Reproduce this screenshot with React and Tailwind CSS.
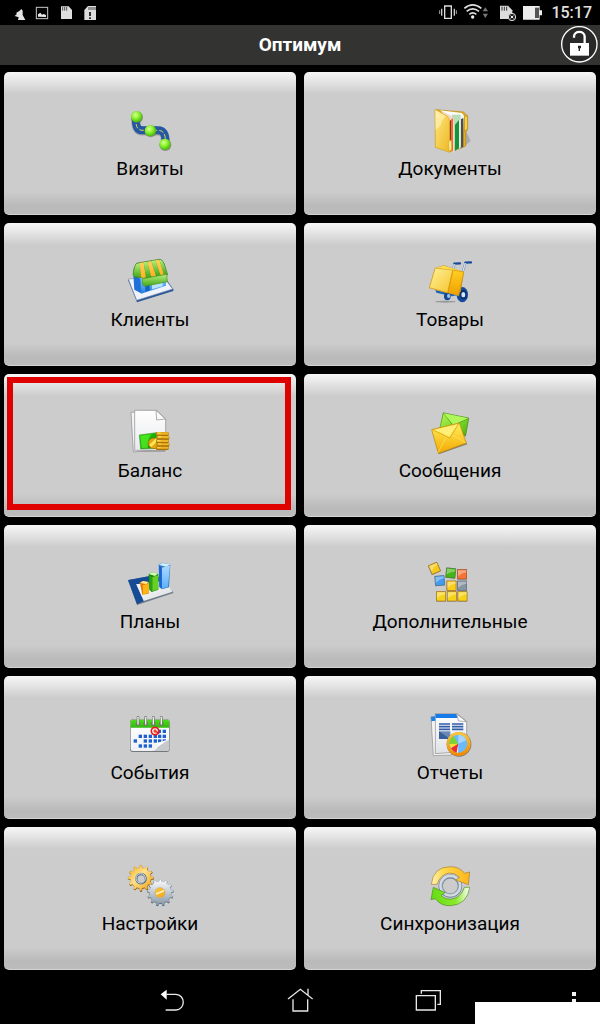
import React from "react";

const Svg = ({ box, children }) => (
  <svg viewBox={box} className="size-12 overflow-visible" aria-hidden="true">
    {children}
  </svg>
);

const Grad = ({ id, from, to, diagonal }) => (
  <linearGradient id={id} x1="0" y1="0" x2={diagonal ? "1" : "0"} y2="1">
    <stop offset="0" stopColor={from} />
    <stop offset="1" stopColor={to} />
  </linearGradient>
);

function VisitsIcon() {
  return (
    <Svg box="48 18 144 144">
      <defs>
        <radialGradient id="vBall" cx=".4" cy=".35" r=".65">
          <stop offset="0" stopColor="#d8ff9a" />
          <stop offset=".5" stopColor="#8bf22c" />
          <stop offset="1" stopColor="#43b80a" />
        </radialGradient>
      </defs>
      <path d="M78 54C76 82 82 94 100 93H142C160 92 168 104 166 134" fill="none" stroke="#888" strokeOpacity=".6" strokeWidth="27" />
      <path d="M78 52C76 80 82 92 100 91H142C160 90 168 102 166 132" fill="none" stroke="#2458a5" strokeWidth="24" />
      <path d="M78 52C76 80 82 92 100 91H142C160 90 168 102 166 132" fill="none" stroke="#e8d848" strokeWidth="3" strokeDasharray="14 6" />
      {[[80, 50], [121, 92], [165, 133]].map(([x, y]) => (
        <g key={x}>
          <circle cx={x + 1} cy={y + 2} r="18" fill="#666" fillOpacity=".6" />
          <circle cx={x} cy={y} r="17" fill="url(#vBall)" />
        </g>
      ))}
    </Svg>
  );
}

function DocumentsIcon() {
  return (
    <Svg box="48 18 144 144">
      <defs>
        <Grad id="dFront" from="#ffe982" to="#ecb51e" diagonal />
        <Grad id="dPage" from="#ffffff" to="#c9d4ce" />
      </defs>
      <path d="M158 144L182 122L168 92L150 146Z" fill="#777" fillOpacity=".4" />
      <path d="M76 29L160 36L172 47V90L167 96V138L148 147L78 142Z" fill="#e4ac22" stroke="#b8860b" strokeWidth="2" />
      <path d="M163 48H173V88L163 94Z" fill="#f5cf4e" stroke="#b18422" strokeWidth="2" />
      <path d="M90 31L155 39L162 47L157 144L148 146L120 50Z" fill="url(#dPage)" />
      <path d="M152 58L160 54V140L152 145Z" fill="#504e45" />
      <path d="M126 44L152 44V139L134 153Z" fill="#b8ddb9" />
      <path d="M135 74L147 60V144L135 153Z" fill="#159338" />
      <path d="M147 60L152 58V140L147 145Z" fill="#e7eeee" />
      <path d="M96 34L125 47L132 60V154L120 157Z" fill="#f4dace" />
      <path d="M118 64L129 54V153L118 157Z" fill="#f1672e" />
      <path d="M119 65L123 60V155L119 157Z" fill="#713317" />
      <path d="M75 28L111 48Q119 54 119 65V119L125 124V151L119 157L76 142Z" fill="url(#dFront)" stroke="#d3a321" strokeWidth="2" />
      <path d="M76 30L107 48Q97 57 92 76L77 90Z" fill="#fff8c9" fillOpacity=".55" />
      <path d="M116 124L124 122V149L117 153Z" fill="#fff2a2" stroke="#d6a42c" strokeWidth="2" />
    </Svg>
  );
}

function ClientsIcon() {
  return (
    <Svg box="48 21 144 144">
      <defs>
        <Grad id="cWall" from="#9bdaff" to="#237de1" />
        <Grad id="cGreen" from="#b6f079" to="#42a51a" />
        <Grad id="cGold" from="#ffd25b" to="#ffaf26" />
      </defs>
      <path d="M54 90L81 157L190 123V118L166 84Z" fill="#2b5997" />
      <path d="M55 87L80 151L188 117L160 80Z" fill="#eff3fb" stroke="#7c8da9" strokeWidth="2" />
      <path d="M70 74L93 88V130L73 119Z" fill="#1e70d6" />
      <path d="M91 78L168 73V107L93 131Z" fill="url(#cWall)" />
      <path d="M106 99L119 97V121L106 125Z" fill="#1563bf" />
      <path d="M126 97L158 90V109L126 118Z" fill="#b8e3ff" />
      <path d="M78 42Q80 38 88 38L148 28Q157 28 162 40L173 74Q155 83 140 77Q119 89 100 84L79 82L69 76Q70 54 78 42Z" fill="#3f9a20" stroke="#39791c" strokeWidth="2" />
      <path d="M79 42L89 39L93 83L70 78Q72 54 79 42Z" fill="url(#cGreen)" />
      <path d="M89 39L101 37L108 82Q100 86 93 81Z" fill="url(#cGold)" />
      <path d="M101 37L112 35L123 80Q114 83 108 80Z" fill="url(#cGreen)" />
      <path d="M112 35L124 33L138 77Q130 82 123 79Z" fill="url(#cGold)" />
      <path d="M124 33L136 31L151 76Q143 79 138 76Z" fill="url(#cGreen)" />
      <path d="M136 31L148 29L162 73Q157 77 151 74Z" fill="url(#cGold)" />
      <path d="M148 29Q157 29 161 41L172 72L162 74Z" fill="url(#cGreen)" />
      <path d="M98 86L170 73L172 95L104 109Q94 104 98 86Z" fill="url(#cGreen)" stroke="#489421" strokeWidth="2" />
    </Svg>
  );
}

function GoodsIcon() {
  return (
    <Svg box="48 21 144 144">
      <defs>
        <Grad id="gFront" from="#fff29b" to="#f5c42d" diagonal />
        <Grad id="gSide" from="#ffcf24" to="#efa000" />
      </defs>
      <ellipse cx="106" cy="155" rx="31" ry="3" fill="#777" fillOpacity=".6" />
      <path d="M133 41L150 40M166 38L183 37" stroke="#174b9a" strokeWidth="7" strokeLinecap="round" />
      <path d="M133 42L128 66M166 39L158 66" stroke="#7e99bd" strokeWidth="7" />
      <path d="M133 42L128 66M166 39L158 66" stroke="#e1edfa" strokeWidth="3" />
      <path d="M76 120L122 131L147 122V134L126 139L79 128Z" fill="#1a66bb" />
      <ellipse cx="112" cy="139" rx="10" ry="12" fill="#104a97" />
      <ellipse cx="116" cy="138" rx="5" ry="6" fill="#a6bfde" />
      <ellipse cx="157" cy="134" rx="17" ry="23" fill="#144a9d" />
      <ellipse cx="160" cy="134" rx="10" ry="14" fill="#092f73" />
      <ellipse cx="160" cy="134" rx="6" ry="8" fill="#d7e4f4" />
      <path d="M75 54L101 46L162 66L152 127L113 130L57 114Z" fill="#c88a08" />
      <path d="M76 54L101 47L161 65L128 61Z" fill="#ffe254" />
      <path d="M76 54L128 60L113 128L58 113Z" fill="url(#gFront)" stroke="#d6a21d" strokeWidth="2" />
      <path d="M129 60L161 66L146 137L114 128Z" fill="url(#gSide)" stroke="#d49508" strokeWidth="2" />
    </Svg>
  );
}

function BalanceIcon() {
  return (
    <Svg box="48 24 144 144">
      <defs>
        <Grad id="bPage" from="#ffffff" to="#e8eaee" />
        <Grad id="bCash" from="#24d509" to="#138a00" diagonal />
      </defs>
      <path d="M71 154L166 151V155H77Z" fill="#777" fillOpacity=".6" />
      <path d="M63 37L120 33L125 151L70 156Z" fill="#f3f3f5" stroke="#888" strokeWidth="2" />
      <path d="M74 31H140L167 57V151H74Z" fill="url(#bPage)" stroke="#888" strokeWidth="2" />
      <path d="M138 31L166 57L140 60Z" fill="#fafafa" stroke="#898989" strokeWidth="2" />
      <path d="M88 105L140 98L139 145L92 147Z" fill="url(#bCash)" stroke="#3f9a2c" strokeWidth="2" />
      <path d="M91 107L124 103Q110 123 114 143L95 144Z" fill="#59f42b" fillOpacity=".7" />
      <circle cx="131" cy="130" r="16" fill="#e3a711" stroke="#a66e00" strokeWidth="2" />
      <path d="M121 138L142 117" stroke="#ffe458" strokeWidth="9" />
      {[144, 134, 124, 113, 102].map((y, i) => (
        <g key={y}>
          <rect x={138 + (i % 2) * 2} y={y - 6} width="38" height="12" rx="3" fill="#a87308" />
          <rect x={140 + (i % 2) * 2} y={y - 5} width="35" height="7" rx="2" fill="#efb523" />
          <path d={`M${142 + (i % 2) * 2} ${y - 3}h10`} stroke="#ffe269" strokeWidth="3" />
        </g>
      ))}
    </Svg>
  );
}

function MessagesIcon() {
  return (
    <Svg box="48 24 144 144">
      <defs>
        <Grad id="mG" from="#b8fa54" to="#4bb40e" diagonal />
        <Grad id="mY" from="#fff05c" to="#f4a800" />
      </defs>
      <path d="M99 37L177 55L167 110L91 90Z" fill="#666" fillOpacity=".6" />
      <path d="M100 39L176 54L167 106L88 91Z" fill="url(#mG)" stroke="#4d9714" strokeWidth="2" />
      <path d="M101 40L130 77L175 55M130 77L167 105" fill="none" stroke="#398f0c" strokeWidth="2" />
      <path d="M101 40L130 74L174 55Z" fill="#b0f75c" />
      <path d="M66 92L86 163L172 133L169 128Z" fill="#6c603f" fillOpacity=".7" />
      <path d="M65 89L148 69L169 129L85 160Z" fill="url(#mY)" stroke="#c08b0d" strokeWidth="2" />
      <path d="M84 158L110 109M167 128L126 105" stroke="#f9e66f" strokeWidth="2" />
      <path d="M67 89L119 114L147 70Z" fill="#ffe55a" stroke="#c99508" strokeWidth="2" />
      <path d="M73 89L118 108L143 73Z" fill="#fff48b" fillOpacity=".6" />
    </Svg>
  );
}

function PlansIcon() {
  return (
    <Svg box="48 27 144 144">
      <defs>
        <Grad id="pBase" from="#ffffff" to="#d9dce0" diagonal />
        <Grad id="pBlue" from="#add9ff" to="#59b0ff" />
      </defs>
      <path d="M54 91L124 77L189 124L190 129L81 165Z" fill="#6e7b87" />
      <path d="M54 90L140 74L163 102L102 153L81 163Z" fill="#164c96" />
      <path d="M79 103L164 92L188 125L101 153Z" fill="url(#pBase)" />
      <path d="M79 103L93 101L106 135L96 139Z" fill="#f1f2f7" />
      <path d="M90 98L99 93L116 97V131L97 134Z" fill="#e67800" />
      <path d="M90 98L99 93L116 96L108 103Z" fill="#ffe88f" />
      <path d="M98 106L116 101V130L99 133Z" fill="#ffb516" />
      <path d="M116 72L127 67L145 72V119L125 126L118 119Z" fill="#18820f" />
      <path d="M116 72L127 67L144 71L135 78Z" fill="#d5ffb0" />
      <path d="M118 76L126 81V124L119 118Z" fill="#25a511" />
      <path d="M127 81L145 76V118L127 124Z" fill="#69ce25" />
      <path d="M146 43L157 38L181 43L177 112L156 118L148 111Z" fill="#3d80bf" />
      <path d="M146 44L157 39L181 43L168 50Z" fill="#d3efff" />
      <path d="M147 46L155 52V116L148 110Z" fill="#1763dc" />
      <path d="M156 53L180 46L174 110L156 116Z" fill="url(#pBlue)" />
    </Svg>
  );
}

const Block = ({ x, y, color, edge, turn = 0 }) => (
  <g transform={`rotate(${turn} ${x} ${y})`}>
    <rect x={x - 15} y={y - 15} width="30" height="31" rx="2" fill="#666" fillOpacity=".6" />
    <rect x={x - 13} y={y - 14} width="27" height="28" fill={color} stroke={edge} strokeWidth="2" />
    <path d={`M${x - 12} ${y - 12}h25v6q-13 1-25 12Z`} fill="white" fillOpacity=".35" />
  </g>
);

function ExtraIcon() {
  return (
    <Svg box="948 27 144 144">
      <Block x={973} y={55} color="#f6ca1d" edge="#a67916" turn={-24} />
      <Block x={989} y={92} color="#439bed" edge="#477297" turn={-5} />
      <Block x={1022} y={69} color="#43b516" edge="#457f24" turn={6} />
      <Block x={1056} y={73} color="#f67338" edge="#ae5125" />
      <Block x={1024} y={107} color="#f9ce17" edge="#b07618" />
      <Block x={1056} y={107} color="#8794a1" edge="#607383" />
      {[993, 1025, 1057].map((x) => (
        <Block key={x} x={x} y={139} color="#f4d319" edge="#b27919" />
      ))}
    </Svg>
  );
}

function EventsIcon() {
  const rows = [
    [79, [148, 163]],
    [94, [91, 106, 121, 136, 149, 163]],
    [108, [76, 106, 121, 136, 149, 163]],
    [123, [91, 106, 121]],
  ];
  return (
    <Svg box="48 15 144 144">
      <defs>
        <Grad id="ePage" from="#ffffff" to="#eef1f6" />
        <Grad id="eTop" from="#4fdc1a" to="#32b80c" />
      </defs>
      <rect x="60" y="43" width="119" height="98" rx="9" fill="#777" />
      <rect x="62" y="44" width="115" height="94" rx="7" fill="url(#ePage)" />
      <path d="M62 68V51Q62 44 70 44H169Q178 44 178 51V68Z" fill="url(#eTop)" />
      {rows.map(([y, xs]) =>
        xs.map((x) => <rect key={`${x}-${y}`} x={x - 5} y={y - 5} width="10" height="10" fill="#1e61ce" />)
      )}
      <path d="M126 138Q145 135 144 116Q155 111 178 104V130Q178 138 170 138Z" fill="#c6cacc" />
      <path d="M128 136Q146 128 143 113L177 103Z" fill="#fff" />
      {[84, 107, 130, 154].map((x) => (
        <g key={x}>
          <circle cx={x} cy="56" r="7" fill="#66824e" />
          <path d={`M${x} 37V58`} stroke="#777" strokeWidth="8" strokeLinecap="round" />
          <path d={`M${x} 37V57`} stroke="#eee" strokeWidth="4" strokeLinecap="round" />
        </g>
      ))}
      <circle cx="135" cy="78" r="11" fill="white" stroke="#e51921" strokeWidth="5" />
      <circle cx="135" cy="78" r="5" fill="#ff4520" />
      <path d="M137 80L148 85" stroke="#e51921" strokeWidth="4" />
    </Svg>
  );
}

function ReportsIcon() {
  return (
    <Svg box="948 15 144 144">
      <defs>
        <Grad id="rPage" from="#ffffff" to="#dfe2e5" />
        <Grad id="rRing" from="#ffc83b" to="#ef8900" />
      </defs>
      <path d="M963 35L1017 32L1025 150L970 152Z" fill="#f5f5f6" stroke="#888" strokeWidth="2" />
      <path d="M963 36L978 34V47L964 49Z" fill="#1681ed" />
      <path d="M976 26H1041L1070 49V139L976 146Z" fill="url(#rPage)" stroke="#858585" strokeWidth="2" />
      <path d="M976 27H1039L1043 39H977Z" fill="#167bea" />
      <path d="M1040 27L1069 50L1046 48Z" fill="#f9fbff" stroke="#8d8d8d" strokeWidth="2" />
      <path d="M987 57H1020M987 65H1020M987 73H1020M1026 57H1060M1026 65H1060M1026 73H1060" stroke="#315da9" strokeWidth="5" />
      <rect x="987" y="79" width="34" height="23" fill="#6c89b6" />
      <path d="M987 79L1021 102H987Z" fill="#365f9c" />
      <circle cx="1047" cy="118" r="37" fill="#777" />
      <circle cx="1046" cy="117" r="36" fill="url(#rRing)" />
      <circle cx="1045" cy="116" r="27" fill="#6abaff" />
      <path d="M1045 116L1031 93A27 27 0 0 0 1018 117Z" fill="#7ed331" />
      <path d="M1045 116L1018 117L1023 130Z" fill="#ffda35" />
      <path d="M1045 116L1023 130Q1029 140 1040 143Z" fill="#f32a25" />
      <path d="M1045 116L1040 143H1044Z" fill="#f4f4f4" />
      <path d="M1045 116V89A27 27 0 0 1 1069 106Z" fill="#a7d5ff" />
    </Svg>
  );
}

function gearPath(cx, cy, outer, inner, teeth) {
  const points = [];
  for (let i = 0; i < teeth; i++) {
    [[-0.25, inner], [-0.14, outer], [0.14, outer], [0.25, inner]].forEach(([shift, r]) => {
      const a = ((i + shift) / teeth) * Math.PI * 2 - Math.PI / 2;
      points.push(`${cx + r * Math.cos(a)} ${cy + r * Math.sin(a)}`);
    });
  }
  return `M${points.join("L")}Z`;
}

function SettingsIcon() {
  return (
    <Svg box="48 18 144 144">
      <defs>
        <Grad id="sGold" from="#ffcc35" to="#f4a31a" diagonal />
        <linearGradient id="sShine" x1="0" y1="0" x2="1" y2="1">
          <stop offset="0" stopColor="#f7b31c" />
          <stop offset=".45" stopColor="#ffe08a" />
          <stop offset="1" stopColor="#ef9d09" />
        </linearGradient>
        <Grad id="sSilver" from="#ffffff" to="#8798a6" />
      </defs>
      <path d={gearPath(93, 71, 39, 31, 12)} fill="#71531e" />
      <path d={gearPath(92, 69, 38, 31, 12)} fill="url(#sShine)" stroke="#d59222" strokeWidth="1" />
      <circle cx="93" cy="71" r="14" fill="#cccccc" stroke="#5b7085" strokeWidth="7" />
      <circle cx="92" cy="70" r="14" fill="none" stroke="#d6e4ee" strokeWidth="3" />
      <path d={gearPath(151, 114, 40, 33, 13)} fill="#42576a" />
      <path d={gearPath(151, 112, 39, 33, 13)} fill="url(#sSilver)" stroke="#8b98a4" strokeWidth="1" />
      <circle cx="150" cy="113" r="15" fill="url(#sGold)" stroke="#c8a969" strokeWidth="2" />
      <path d="M138 117L162 107" stroke="#fff4c4" strokeWidth="5" />
    </Svg>
  );
}

function SyncIcon() {
  return (
    <Svg box="948 18 144 144">
      <defs>
        <linearGradient id="yGold" x1="0" y1="0" x2="1" y2="0">
          <stop offset="0" stopColor="#fff5bb" />
          <stop offset=".3" stopColor="#ffd94d" />
          <stop offset="1" stopColor="#fdb61b" />
        </linearGradient>
        <linearGradient id="yGreen" x1="0" y1="0" x2="1" y2="0">
          <stop offset="0" stopColor="#64dc12" />
          <stop offset=".65" stopColor="#8ce92c" />
          <stop offset="1" stopColor="#ffffff" />
        </linearGradient>
      </defs>
      <circle cx="1021" cy="93" r="29" fill="none" stroke="#6b7f91" strokeWidth="13" />
      <circle cx="1021" cy="92" r="29" fill="none" stroke="#d3dbe2" strokeWidth="9" />
      <circle cx="1021" cy="92" r="25" fill="none" stroke="#8596a5" strokeWidth="2" />
      <path d="M964 88Q970 35 1022 35Q1048 35 1064 55L1079 51L1075 89L1037 75L1049 67Q1035 53 1018 54Q992 57 981 88Z" fill="url(#yGold)" stroke="#a77b29" strokeWidth="2" />
      <path d="M1079 97Q1072 148 1023 152Q993 154 976 131L963 134L970 97L1006 113L993 121Q1009 138 1034 130Q1056 121 1063 97Z" fill="url(#yGreen)" stroke="#4f8d26" strokeWidth="2" />
    </Svg>
  );
}

const items = [
  ["Визиты", VisitsIcon],
  ["Документы", DocumentsIcon],
  ["Клиенты", ClientsIcon],
  ["Товары", GoodsIcon],
  ["Баланс", BalanceIcon, true],
  ["Сообщения", MessagesIcon],
  ["Планы", PlansIcon],
  ["Дополнительные", ExtraIcon],
  ["События", EventsIcon],
  ["Отчеты", ReportsIcon],
  ["Настройки", SettingsIcon],
  ["Синхронизация", SyncIcon],
];

function Tile({ label, Icon, marked }) {
  return (
    <button
      type="button"
      className="relative flex h-[143px] flex-col items-center rounded-[5px] border-b border-[#d4d4d4] bg-[linear-gradient(to_bottom,#f7f7f7_0px,#cccccc_22px,#cccccc_120px,#bababa_134px,#bcbcbc_100%)] pt-[34px] text-black"
    >
      <Icon />
      <span className="text-[19px] leading-[30px]">{label}</span>
      {marked && <span className="absolute top-[3px] right-[5px] bottom-[6px] left-[3px] border-[6px] border-[#df0000]" />}
    </button>
  );
}

function StatusBar() {
  return (
    <div className="flex h-[25px] items-center justify-between pr-2 pl-[14px] text-[#e0e0e0]">
      <svg viewBox="42 0 252 75" className="h-[25px] w-[84px]" aria-hidden="true">
        <path d="M44 48L50 43L49 38L58 33L64 27L68 32V45L76 60H54L56 52Z" fill="#e4e4e4" />
        <rect x="109" y="22" width="34" height="34" fill="none" stroke="#c7c7c7" strokeWidth="3" />
        <path d="M114 50V43L121 38L126 44L131 42L138 45V51Z" fill="#e6e6e6" />
        <path d="M183 19H206L216 30V57H183Z" fill="#dedede" />
        <path d="M188 21V32M194 21V32M200 21V32" stroke="#555" strokeWidth="3" />
        <path d="M264 18H288V60H253V30Z" fill="#dedede" />
        <path d="M267 21V30M273 21V30M279 21V30M285 21V30" stroke="#444" strokeWidth="3" />
        <path d="M270 36V48M270 52V57" stroke="#111" strokeWidth="5" />
      </svg>
      <div className="flex items-center gap-2">
        <svg viewBox="30 0 312 75" className="h-[25px] w-[104px]" aria-hidden="true">
          <path d="M47 18H67V55H47Z" fill="none" stroke="#ddd" strokeWidth="4" />
          <path d="M38 26V47M76 26V47" stroke="#ccc" strokeWidth="4" />
          <path d="M32 31V42M82 31V42" stroke="#aaa" strokeWidth="3" />
          <path d="M106 25Q131 4 157 25M113 34Q131 19 150 34M121 43Q131 34 142 43" fill="none" stroke="#ddd" strokeWidth="5" />
          <circle cx="131" cy="51" r="5" fill="#eee" />
          <path d="M161 34L169 22L177 34ZM161 41H177L169 54Z" fill="#777" />
          <path d="M213 17H237L250 31V57H213Z" fill="#ddd" />
          <path d="M219 20V32M226 20V32M233 20V32" stroke="#333" strokeWidth="3" />
          <circle cx="249" cy="51" r="11" fill="#222" stroke="#ddd" strokeWidth="3" />
          <path d="M245 47L253 55M253 47L245 55" stroke="#eee" strokeWidth="3" />
          <path d="M282 18H332V31H339V46H332V59H282Z" fill="#eee" />
          <path d="M318 23H330V54H318Z" fill="#555" />
        </svg>
        <time className="text-base font-medium">15:17</time>
      </div>
    </div>
  );
}

function NavBar() {
  const common = "flex h-12 items-center justify-center";
  return (
    <nav aria-label="Навигация" className="grid grid-cols-[1fr_128px_128px_128px_1fr]">
      <span />
      <button type="button" aria-label="Назад" className={common}>
        <svg viewBox="57 81 78 78" className="size-[26px]" fill="none" stroke="#e8e8e8" strokeWidth="4">
          <path d="M79 103H108C137 105 137 148 108 150H77" />
          <path d="M80 89V119L62 103Z" fill="#fff" stroke="none" />
        </svg>
      </button>
      <button type="button" aria-label="Домой" className={common}>
        <svg viewBox="441 81 78 78" className="size-[26px]" fill="none" stroke="#e8e8e8" strokeWidth="4">
          <path d="M444 117L481 88L518 117M459 118V153H503V118M504 86V105" />
        </svg>
      </button>
      <button type="button" aria-label="Недавние" className={common}>
        <svg viewBox="825 81 78 78" className="size-[26px]" fill="none" stroke="#e8e8e8" strokeWidth="4">
          <path d="M829 107H886V150H829ZM844 101V92H901V133H892" />
        </svg>
      </button>
      <div className="flex justify-end pr-[14px]">
        <button type="button" aria-label="Меню" className="flex h-12 w-6 items-center justify-center">
          <svg viewBox="0 0 6 20" className="h-5 w-[6px]" fill="#f3f3f3">
            <path d="M1 2H5V6H1ZM1 9H5V13H1ZM1 16H5V20H1Z" />
          </svg>
        </button>
      </div>
    </nav>
  );
}

export default function App() {
  return (
    <div className="relative flex min-h-screen flex-col bg-black font-['Roboto',sans-serif]">
      <StatusBar />
      <header className="grid h-10 grid-cols-[40px_1fr_40px] items-center bg-[#333332] text-white">
        <span />
        <h1 className="text-center text-[19px] leading-7 font-bold">Оптимум</h1>
        <button type="button" aria-label="Разблокировать" className="flex h-10 items-center justify-center">
          <svg viewBox="390 75 120 120" className="size-10">
            <circle cx="448" cy="133" r="53" fill="#292929" stroke="#fff" strokeWidth="4" />
            <path d="M432 113V110C432 91 464 91 464 110V130" fill="none" stroke="#fff" strokeWidth="7" />
            <path d="M420 129H477V167H420Z" fill="#fff" />
            <path d="M444 137H453V145H450V153H446V145H444Z" fill="#222" />
          </svg>
        </button>
      </header>
      <main className="grid grow grid-cols-2 content-start gap-2 px-1 pt-[7px] pb-[6px]">
        {items.map(([label, Icon, marked]) => (
          <Tile key={label} label={label} Icon={Icon} marked={marked} />
        ))}
      </main>
      <NavBar />
      <div className="absolute right-0 bottom-0 h-[22px] w-[125px] bg-white" />
    </div>
  );
}
